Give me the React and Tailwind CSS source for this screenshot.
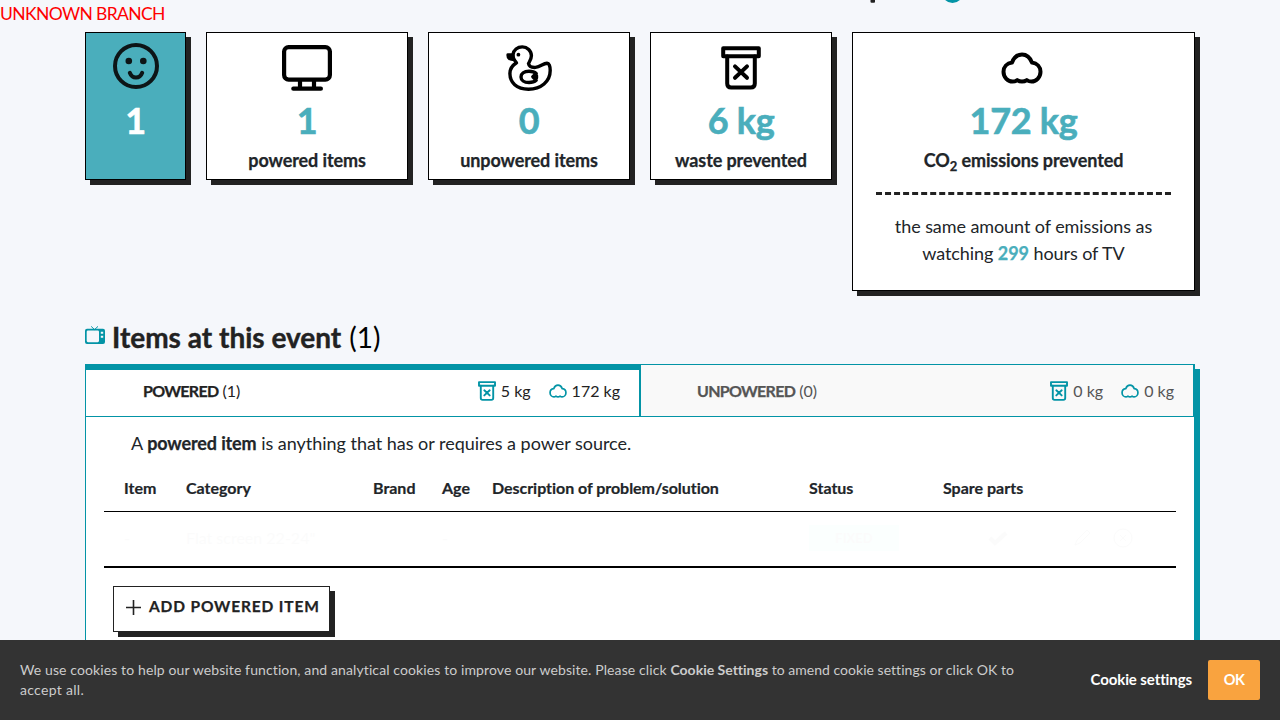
import React from "react";

const Bin = ({ className, w = 2.1 }) => (
  <svg className={className} viewBox="0 0 20 22" fill="none" stroke="currentColor" strokeWidth={w} strokeLinejoin="round" strokeLinecap="round">
    <rect x="1.1" y="1.1" width="17.8" height="4" />
    <path d="M3.1 5.2v13.6q0 2 2 2h9.8q2 0 2-2V5.2M7 10.2l6 5.7M13 10.2l-6 5.7" />
  </svg>
);

const Cloud = ({ className, w = 4 }) => (
  <svg className={className} viewBox="0 0 42 32" fill="none" stroke="currentColor" strokeWidth={w} strokeLinejoin="round" strokeLinecap="round">
    <path d="M11 10.6C13 5.2 16.600 2.400 21 2.400S29 5.200 31 10.600C36 11.200 39.500 15 39.500 19.800C39.500 25.500 35 29.600 30.500 29.600C28.500 29.600 27.200 29 25.800 28.100C24.300 29.100 22.800 29.600 21 29.600S17.700 29.100 16.200 28.100C14.800 29 13.500 29.600 11.500 29.600C7 29.600 2.500 25.500 2.500 19.800C2.500 15 6 11.200 11 10.600Z" />
  </svg>
);

const Smile = () => (
  <svg className="size-[46px]" viewBox="0 0 46 46" fill="none" stroke="#0d1517" strokeWidth="4">
    <circle cx="23" cy="23" r="21" />
    <path d="M16.800 29.800q1.800 4.800 6.200 4.800t6.200-4.800" strokeLinecap="round" />
    <circle cx="15.800" cy="18" r="3.300" fill="#0d1517" stroke="none" />
    <circle cx="30.300" cy="18" r="3.300" fill="#0d1517" stroke="none" />
  </svg>
);

const Monitor = () => (
  <svg className="w-[50px] h-[46px]" viewBox="0 0 50 46" fill="none" stroke="#000" strokeWidth="4.200">
    <rect x="2.100" y="2.100" width="45.800" height="32.500" rx="4.500" />
    <path d="M18 35v8M32 35v8" />
    <path d="M11.300 43.700h27.600" strokeLinecap="round" />
  </svg>
);

const Duck = () => (
  <svg className="w-[46px] h-[46px]" viewBox="0 0 46 46" fill="none" stroke="#000" strokeWidth="3.400" strokeLinejoin="round" strokeLinecap="round">
    <path d="M10.500 17.800C8 15 6.600 12.500 7 9.500C7.500 5 11.500 1.900 16.300 1.900C21.300 1.900 25.400 5.900 25.400 10.800C25.400 14 24 15.800 22.500 18.500C23 21.500 26 22.600 29.500 22.400C34.500 22 37 18.500 41 18.200C43 18.100 44.200 21 44.200 25.500C44.200 36.500 35 44.200 22.500 44.200C10.500 44.200 3.900 37.500 3.900 28.500C3.900 23.500 6.500 20.300 10.500 17.800Z" />
    <path d="M7 9.600H1.800C1.500 13 3.500 15 7.500 14.600Z" fill="#000" strokeWidth="2.800" />
    <circle cx="12.400" cy="9.700" r="1.900" fill="#000" stroke="none" />
    <path d="M30.200 28.500C28.500 26.900 26 26.300 23 26.300C18 26.300 15 28.700 15 31.900S18 37.500 23 37.500C26 37.500 28.500 36.800 30.200 35.300M30 28.800L26.800 31.700L30 35M30.500 30.600v2.500" />
  </svg>
);

const Tv = () => (
  <svg className="-mt-[3px] w-5 h-[18px]" viewBox="0 0 20 18">
    <path d="M6.200 0.400L9.500 3.600L13 0.400" fill="none" stroke="#0394a6" strokeWidth="1" />
    <path fillRule="evenodd" fill="#0394a6" d="M2 2.800h16q2 0 2 2v11.200q0 2-2 2H2q-2 0-2-2V4.800q0-2 2-2ZM3 4.500q-1.300 0-1.300 1.300v9q0 1.400 1.300 1.400h9.700q1.300 0 1.300-1.400v-9q0-1.300-1.300-1.300ZM15.800 5.800v2h2.400v-2ZM15.800 9.700v2h2.400v-2Z" />
  </svg>
);

function Card({ width, icon, value, label, teal, children }) {
  return (
    <section
      className={`${width} shrink-0 border border-black shadow-[5px_5px_0_0_#222] ${teal ? "bg-[#4aaebc] text-white" : "bg-white text-[#4aaebc]"}`}
    >
      <div className="flex h-[69px] items-center justify-center text-black">{icon}</div>
      <div className="h-[42px] text-center text-[36px] leading-[36px] font-bold tracking-[-0.3px] [-webkit-text-stroke:0.6px]">{value}</div>
      {label && <div className="h-[35px] text-center text-[18px] leading-[33px] font-bold tracking-[-0.1px] text-[#212529] [-webkit-text-stroke:0.25px]">{label}</div>}
      {children}
    </section>
  );
}

function Stats({ waste, co2 }) {
  return (
    <div className="flex items-center text-[16px]">
      <Bin className="mr-[5px] h-5 w-[18px] text-[#0394a6]" />
      <span>{waste}</span>
      <Cloud className="mr-[5px] ml-[18px] h-[14px] w-[18px] text-[#0394a6]" />
      <span>{co2}</span>
    </div>
  );
}

const cols = "grid grid-cols-[62px_187px_69px_50px_317px_134px_1fr] pl-5";

export default function App() {
  return (
    <div className="flex h-[720px] w-[1280px] flex-col overflow-hidden bg-[#f5f7fb] font-['Lato','Liberation_Sans',sans-serif] text-[#212529] [font-variant-ligatures:none]">
      <main className="h-[640px] overflow-hidden">
        <header className="relative h-8">
          <p className="text-[17.5px] leading-[27px] tracking-[-0.62px] text-[#ff0000]">UNKNOWN BRANCH</p>
          <svg className="absolute top-0 left-[868px] h-[4px] w-[96px]" viewBox="0 0 96 4">
            <rect x="2.500" y="-4" width="4.500" height="6.800" rx="1" fill="#222" />
            <circle cx="84.500" cy="-7.500" r="10.500" fill="#0394a6" />
          </svg>
        </header>

        <div className="flex h-[259px] items-start gap-5 pl-[85px]">
          <Card width="w-[101px] h-[148px]" teal icon={<div className="-mt-[3px]"><Smile /></div>} value="1" />
          <Card width="w-[202px] h-[148px]" icon={<div className="mt-px"><Monitor /></div>} value="1" label="powered items" />
          <Card width="w-[202px] h-[148px]" icon={<div className="mt-px"><Duck /></div>} value="0" label="unpowered items" />
          <Card width="w-[182px] h-[148px]" icon={<Bin className="mr-px h-[44px] w-[40px]" w={2} />} value="6 kg" label="waste prevented" />
          <Card
            width="w-[343px] h-[259px]"
            icon={<Cloud className="mr-[3px] h-[32px] w-[42px]" />}
            value="172 kg"
            label={<>CO<span className="relative top-[4px] text-[13px]">2</span> emissions prevented</>}
          >
            <div className="flex flex-col items-center text-[#212529]">
              <svg className="mt-[13px] h-[3px] w-[295px]" viewBox="0 0 295 3">
                <path d="M0 1.500H295" stroke="#222" strokeWidth="3" strokeDasharray="6 3.031" />
              </svg>
              <p className="mt-[18px] text-center text-[18px] leading-[27px] tracking-[-0.08px]">
                the same amount of emissions as
                <br />
                watching <b className="text-[#4aaebc] [-webkit-text-stroke:0.25px]">299</b> hours of TV
              </p>
            </div>
          </Card>
        </div>

        <h2 className="flex h-[73px] items-center pt-[18px] pl-[85px] text-[28px] leading-[34px] font-bold text-[#222]">
          <Tv />
          <span className="ml-[7px] [-webkit-text-stroke:0.4px]">Items at this event</span>
          <span className="ml-[8px] font-normal text-black">(1)</span>
        </h2>

        <section className="ml-[85px] h-[400px] w-[1110px] bg-white shadow-[5px_5px_0_0_#0394a6]">
          <div className="flex h-[53px]">
            <div className="flex w-[556px] items-center justify-between border-t-[6px] border-r-2 border-b border-l border-[#0394a6] pr-[19px] pb-[5px] pl-[57px] text-[#222]">
              <span className="text-[16px]"><b className="tracking-[-0.7px] [-webkit-text-stroke:0.25px]">POWERED</b> (1)</span>
              <Stats waste="5 kg" co2="172 kg" />
            </div>
            <div className="flex w-[554px] items-center justify-between border-t border-r-2 border-b border-[#0394a6] bg-[#f9f9f9] pr-[19px] pl-[56px] text-[#555]">
              <span className="text-[16px]"><b className="tracking-[-0.7px] [-webkit-text-stroke:0.25px]">UNPOWERED</b> (0)</span>
              <Stats waste="0 kg" co2="0 kg" />
            </div>
          </div>
          <div className="h-[347px] border-x border-[#0394a6] px-[18px]">
            <p className="h-[50px] pt-[13px] pl-[27px] text-[18px] leading-[27px] tracking-[-0.02px]">A <b className="tracking-[-0.12px] [-webkit-text-stroke:0.25px]">powered item</b> is anything that has or requires a power source.</p>
            <div className={`${cols} h-[45px] border-b border-black pt-[9px] text-[16px] leading-[24px] font-bold [-webkit-text-stroke:0.2px]`}>
              <span>Item</span>
              <span>Category</span>
              <span>Brand</span>
              <span>Age</span>
              <span className="tracking-[-0.04px]">Description of problem/solution</span>
              <span>Status</span>
              <span>Spare parts</span>
            </div>
            <div className="h-[56px] border-b-2 border-black">
              <div className={`${cols} items-center pt-[13px] text-[16px] leading-[26px] opacity-[0.012]`}>
                <span>-</span>
                <span>Flat screen 22-24"</span>
                <span></span>
                <span>-</span>
                <span></span>
                <span className="h-[26px] w-[90px] bg-[#00ffcc] text-center text-[13px] font-bold">FIXED</span>
                <svg className="h-5 w-[200px]" viewBox="0 0 200 20" fill="none" stroke="#000">
                  <path d="M47 10l5 5 11-10" strokeWidth="4" />
                  <path d="M132 17l2-5 10-10 3 3-10 10z" />
                  <circle cx="180" cy="10" r="9" />
                  <path d="M177 7l6 6M183 7l-6 6" />
                </svg>
              </div>
            </div>
            <button className="mt-[18px] ml-[9px] flex h-[46px] w-[217px] items-center border border-[#222] bg-white pb-[4px] pl-[12px] text-[15.5px] font-bold tracking-[0.85px] whitespace-nowrap text-[#222] shadow-[5px_5px_0_0_#222] [-webkit-text-stroke:0.25px]">
              <svg className="mr-2 size-[15px]" viewBox="0 0 15 15" stroke="#222" strokeWidth="1.600"><path d="M7.500 0v15M0 7.500h15" /></svg>
              ADD POWERED ITEM
            </button>
          </div>
        </section>
      </main>

      <footer className="flex h-20 items-center bg-[#333] pr-5 pl-5">
        <p className="flex-1 text-[14px] leading-[20px] text-[#ccc]">
          <span className="tracking-[0.11px]">We use cookies to help our website function, and analytical cookies to improve our website. Please click </span>
          <b>Cookie Settings</b> <span className="tracking-[0.03px]">to amend cookie settings or click OK to</span>
          <br />
          <span className="tracking-[0.3px]">accept all.</span>
        </p>
        <button className="mr-[16px] pb-px text-[15px] font-bold tracking-[-0.1px] text-white">Cookie settings</button>
        <button className="h-10 w-[52px] rounded-[2px] bg-[#f9a33f] pb-px text-[14.5px] font-bold tracking-[-0.5px] text-white">OK</button>
      </footer>
    </div>
  );
}
